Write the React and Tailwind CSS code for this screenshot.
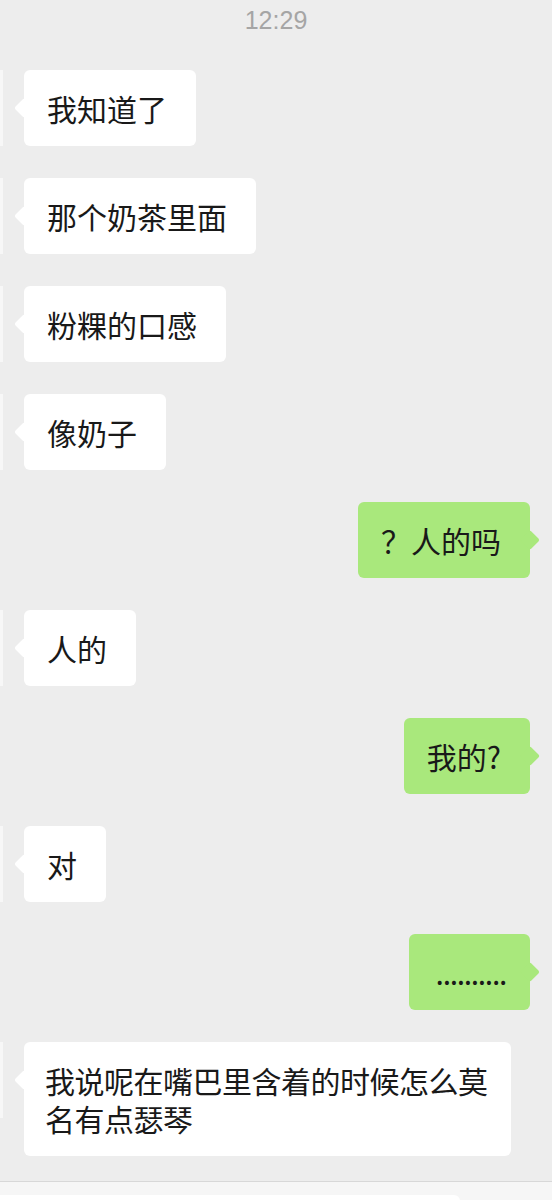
const messages = [
  { from: "them", text: "我知道了" },
  { from: "them", text: "那个奶茶里面" },
  { from: "them", text: "粉粿的口感" },
  { from: "them", text: "像奶子" },
  { from: "me", text: "？人的吗" },
  { from: "them", text: "人的" },
  { from: "me", text: "我的?" },
  { from: "them", text: "对" },
  { from: "me", text: "..........", dots: true },
  { from: "them", text: "我说呢在嘴巴里含着的时候怎么莫名有点瑟琴", long: true },
];

const Bubble = ({ msg }) => {
  const mine = msg.from === "me";
  return (
    <div
      className={
        mine
          ? msg.dots
            ? "relative rounded-md bg-[#a9e87c] py-[19px] pl-[27px] pr-[24px] tracking-[-1.3px]"
            : "relative rounded-md bg-[#a9e87c] py-[19px] pl-[23px] pr-[29px]"
          : msg.long
          ? "relative max-w-[487px] rounded-md bg-white py-[19px] pl-[21px] pr-[22px] tracking-[-0.5px]"
          : "relative rounded-md bg-white py-[19px] pl-[23px] pr-[29px]"
      }
    >
      {/* little tail */}
      <div
        className={
          mine
            ? "absolute top-[31px] right-[-7px] h-[14px] w-[14px] rotate-45 rounded-[2px] bg-[#a9e87c]"
            : "absolute top-[31px] left-[-7px] h-[14px] w-[14px] rotate-45 rounded-[2px] bg-white"
        }
      />
      <p className="relative text-[30px] leading-[38px] text-[#191919]">{msg.text}</p>
    </div>
  );
};

const App = () => {
  return (
    <div
      className="flex h-[1200px] w-full flex-col overflow-hidden bg-[#ededed]"
      style={{ fontFamily: '"Noto Sans CJK SC", "Noto Sans", sans-serif' }}
    >
      <div className="flex-1">
        <div
          className="pt-[4px] text-center text-[25px] leading-[32px] font-light text-[#a5a5a5]"
          style={{ fontFamily: '"Liberation Sans", "Noto Sans", sans-serif' }}
        >
          12:29
        </div>

        <div className="mt-[34px] flex flex-col gap-[32px]">
          {messages.map((m, i) =>
            m.from === "me" ? (
              <div key={i} className="flex justify-end pr-[22px]">
                <Bubble msg={m} />
              </div>
            ) : (
              <div key={i} className="flex items-start">
                <div className="h-[76px] w-[3px] shrink-0 bg-[#f7f7f7]" />
                <div className="ml-[21px]">
                  <Bubble msg={m} />
                </div>
              </div>
            )
          )}
        </div>
      </div>

      {/* input bar, mostly cut off */}
      <div className="h-[19px] shrink-0 border-t border-[#d8d8d8] bg-[#f6f6f6] pt-[13px]">
        <div className="h-[10px] w-[460px] rounded-tr-md bg-white" />
      </div>
    </div>
  );
};

export default App;
